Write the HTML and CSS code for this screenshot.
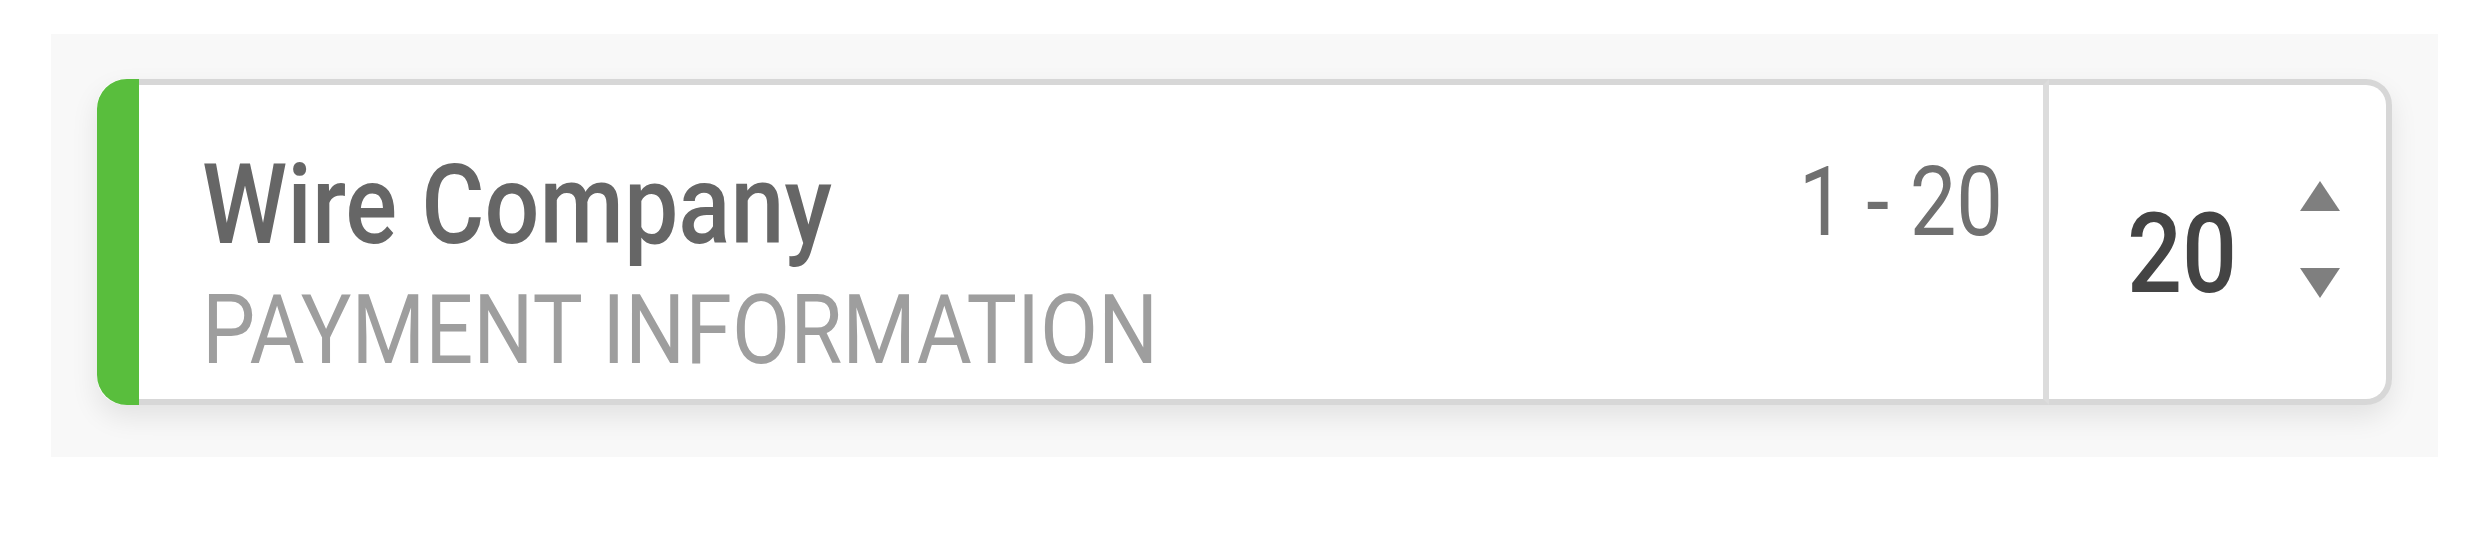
FILE: index.html
```html
<!DOCTYPE html>
<html lang="en">
<head>
    <meta charset="UTF-8">
    <meta name="viewport" content="width=device-width, initial-scale=1.0">
    <title>Wire Company</title>
    <link rel="stylesheet" href="styles.css">
</head>
<body>
<div class="panel">
    <div class="card">
        <div class="stripe"></div>
        <div class="main">
            <div class="info">
                <div class="title">Wire Company</div>
                <div class="subtitle">PAYMENT INFORMATION</div>
            </div>
            <div class="range">1 - 20</div>
        </div>
        <div class="qty">
            <span class="count">20</span>
            <div class="arrows">
                <svg width="40" height="30" viewBox="0 0 40 30"><polygon points="20,0 40,30 0,30"/></svg>
                <svg width="40" height="30" viewBox="0 0 40 30"><polygon points="0,0 40,0 20,30"/></svg>
            </div>
        </div>
    </div>
</div>
</body>
</html>
```

FILE: styles.css
```css
* {
    box-sizing: border-box;
}
body {
    margin: 0;
    background: #fff;
    font-family: Roboto, "Noto Sans", sans-serif;
}
.panel {
    margin: 34px 34px 0 51px;
    padding: 45px 46px 52px;
    background: #f8f8f8;
}
.card {
    display: flex;
    height: 326px;
    background: #fff;
    border-radius: 28px;
    box-shadow: 0 12px 28px rgba(0, 0, 0, 0.09);
}
.stripe {
    flex: none;
    width: 42px;
    background: #59be3d;
    border-radius: 30px 0 0 30px;
}
.main {
    flex: 1;
    display: flex;
    justify-content: space-between;
    padding: 60px 40px 0 63px;
    border: 6px solid #d7d7d7;
    border-left: 0;
    border-right-color: #dcdcdc;
}
/* the type in this card is set narrow */
.title,
.subtitle,
.range,
.count {
    transform: scaleX(0.865);
    transform-origin: left;
}
.title {
    font-size: 112px;
    font-weight: 500;
    line-height: 120px;
    color: #666;
}
.subtitle {
    margin-top: 5px;
    font-size: 96px;
    line-height: 120px;
    color: #9e9e9e;
    transform: scaleX(0.88);
}
.range {
    font-size: 96px;
    line-height: 114px;
    color: #707070;
    transform-origin: right;
}
.qty {
    flex: none;
    width: 343px;
    display: flex;
    align-items: center;
    justify-content: space-between;
    padding: 0 46px 0 78px;
    border: 6px solid #d7d7d7;
    border-left: 0;
    border-radius: 0 26px 26px 0;
}
.count {
    display: inline-block;
    margin-top: 24px;
    font-size: 112px;
    font-weight: 500;
    line-height: 112px;
    color: #444;
}
.arrows {
    display: flex;
    flex-direction: column;
    gap: 57px;
    margin-bottom: 6px;
}
.arrows svg {
    display: block;
    fill: #7f7f7f;
}
```
